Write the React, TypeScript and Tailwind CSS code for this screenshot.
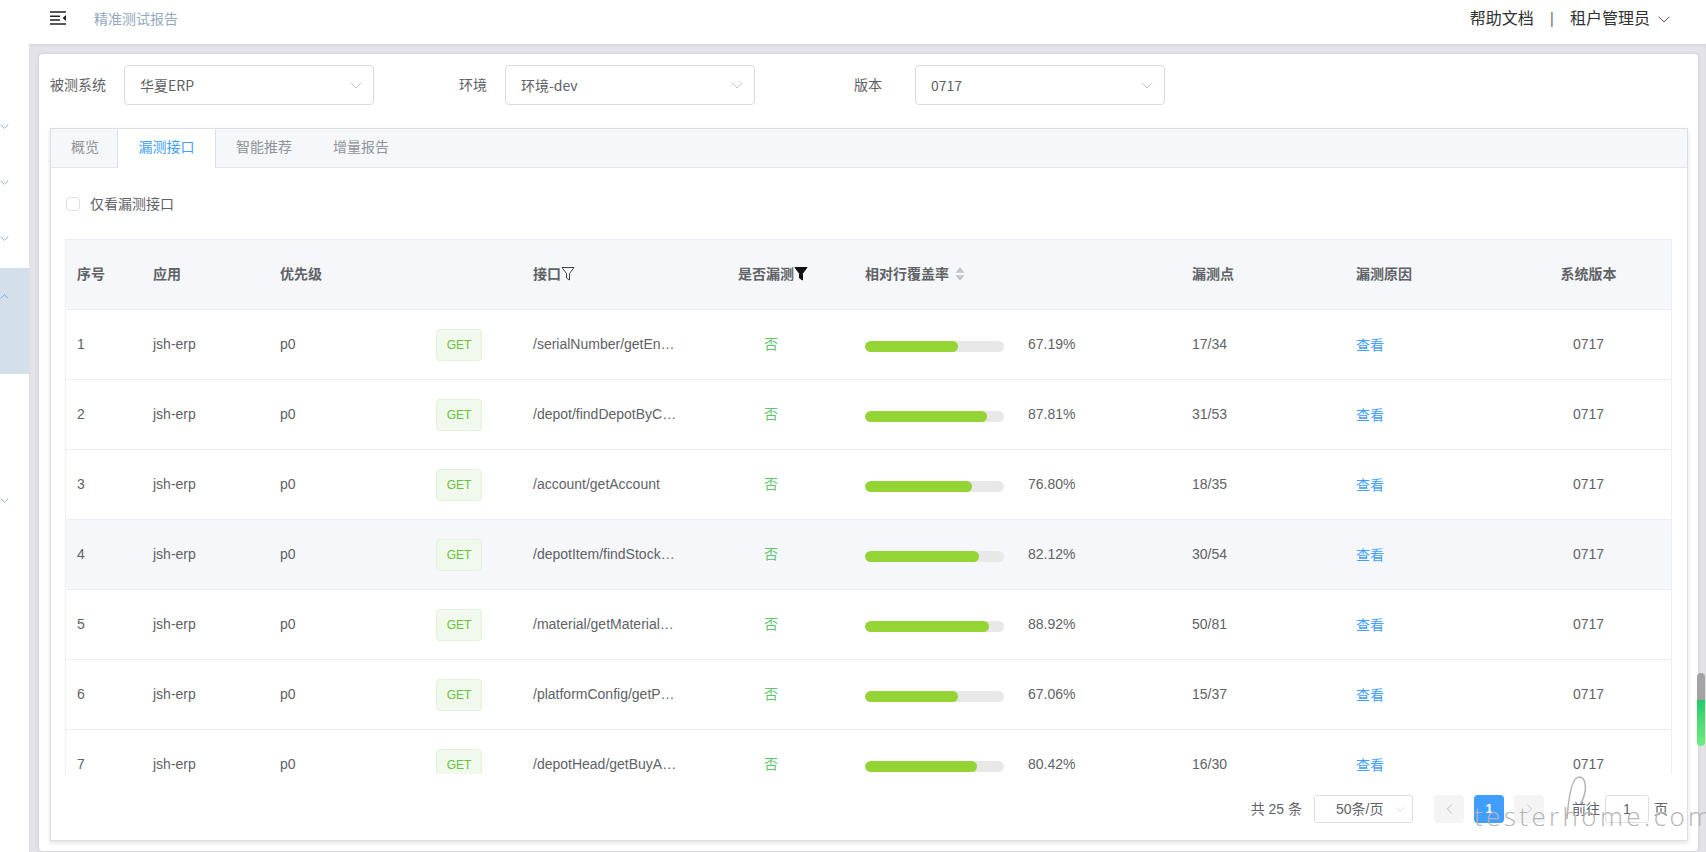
import React from "react";

const rows = [
  { path: "/serialNumber/getEn…", fill: "w-[67.19%]", pct: "67.19%", pts: "17/34" },
  { path: "/depot/findDepotByC…", fill: "w-[87.81%]", pct: "87.81%", pts: "31/53" },
  { path: "/account/getAccount", fill: "w-[76.80%]", pct: "76.80%", pts: "18/35" },
  { path: "/depotItem/findStock…", fill: "w-[82.12%]", pct: "82.12%", pts: "30/54", hover: true },
  { path: "/material/getMaterial…", fill: "w-[88.92%]", pct: "88.92%", pts: "50/81" },
  { path: "/platformConfig/getP…", fill: "w-[67.06%]", pct: "67.06%", pts: "15/37" },
  { path: "/depotHead/getBuyA…", fill: "w-[80.42%]", pct: "80.42%", pts: "16/30" },
];

function Chevron({ className = "" }: { className?: string }) {
  return (
    <svg viewBox="0 0 12 7" fill="none" className={className}>
      <path d="M0.7 0.8 6 6 11.3 0.8" stroke="currentColor" strokeWidth="1" />
    </svg>
  );
}

function SelectBox({ value, className = "" }: { value: string; className?: string }) {
  return (
    <div className={`flex h-10 w-[250px] items-center justify-between rounded border border-[#dcdcdc] pl-[15px] pr-[11px] font-['Noto_Sans_CJK_SC',sans-serif] text-sm text-[#606266] ${className}`}>
      <span>{value}</span>
      <Chevron className="h-[7px] w-[12px] text-[#c0c4cc]" />
    </div>
  );
}

function Funnel({ filled = false }: { filled?: boolean }) {
  return (
    <svg viewBox="0 0 14 15" className="h-[15px] w-[14px]">
      <path
        d="M1 1.5h12L8.5 7.5v6.5L5.5 12V7.5z"
        fill={filled ? "#111" : "none"}
        stroke={filled ? "#111" : "#444"}
        strokeWidth="1"
      />
    </svg>
  );
}

function Row({ r, i }: { r: (typeof rows)[number]; i: number }) {
  return (
    <div className={`flex h-[70px] shrink-0 items-center border-b border-[#ebeef5] pb-[2px] text-sm text-[#606266] ${r.hover ? "bg-[#f5f7fa]" : "bg-white"}`}>
      <div className="w-[76px] pl-[11px]">{i + 1}</div>
      <div className="w-[127px] pl-[11px]">jsh-erp</div>
      <div className="w-[157px] pl-[11px]">p0</div>
      <div className="w-[96px] pl-[10px]">
        <span className="mt-[3px] flex h-8 w-[46px] items-center justify-center rounded border border-[#e1f3d8] bg-[#f0f9eb] text-xs text-[#67c23a]">GET</span>
      </div>
      <div className="w-[164px] whitespace-nowrap pl-[11px]">{r.path}</div>
      <div className="w-[168px] pl-[2px] text-center text-[#5fc56f]">否</div>
      <div className="flex w-[327px] items-center pl-[11px]">
        <div className="mt-[5px] h-[11px] w-[139px] overflow-hidden rounded-full bg-[#e8e8e8]">
          <div className={`h-full rounded-full bg-[#95d435] ${r.fill}`} />
        </div>
        <span className="ml-[24px]">{r.pct}</span>
      </div>
      <div className="w-[164px] pl-[11px]">{r.pts}</div>
      <div className="w-[161px] pl-[11px] text-[#409eff]">
        <span className="relative top-[1px]">查看</span>
      </div>
      <div className="flex-1 text-center">0717</div>
    </div>
  );
}

export default function App() {
  return (
    <div className="relative flex h-[852px] w-[1706px] flex-col overflow-hidden bg-white font-['Liberation_Sans','Noto_Sans_CJK_SC',sans-serif]">
      <header className="flex h-[44px] shrink-0 items-start bg-white">
        <svg viewBox="0 0 16 14" className="ml-[50px] mt-[11px] h-[14px] w-[16px]">
          <path d="M0 1h16M0 13h16M0 5.2h10M0 9h10" stroke="#222" strokeWidth="1.5" fill="none" />
          <path d="M16 4v6l-3.5-3z" fill="#222" />
        </svg>
        <span className="ml-[28px] mt-[9px] text-sm text-[#97a8be]">精准测试报告</span>
        <div className="ml-auto mr-[36px] mt-[7px] flex items-center text-base text-[#303133]">
          <span>帮助文档</span>
          <span className="mx-[16px] text-[#777]">|</span>
          <span>租户管理员</span>
          <Chevron className="ml-[8px] h-[7px] w-[12px] text-[#555]" />
        </div>
      </header>

      <div className="flex min-h-0 flex-1">
        <aside className="flex w-[29px] shrink-0 flex-col bg-white pt-[54px] text-[#5b8fc0]">
          <div className="flex h-14 items-center"><Chevron className="h-[5px] w-[9px]" /></div>
          <div className="flex h-14 items-center"><Chevron className="h-[5px] w-[9px]" /></div>
          <div className="flex h-14 items-center"><Chevron className="h-[5px] w-[9px]" /></div>
          <div className="mt-[2px] h-[106px] bg-[#d3e0ec]">
            <div className="flex h-14 items-center"><Chevron className="h-[5px] w-[9px] rotate-180" /></div>
          </div>
          <div className="mt-[98px] flex h-14 items-center"><Chevron className="h-[5px] w-[9px]" /></div>
        </aside>

        <main className="min-w-0 flex-1 bg-[#e3e3e9] pl-[10px] pt-[10px] shadow-[inset_0_2px_3px_rgba(0,0,0,0.05)]">
          <section className="flex h-[797px] w-[1659px] flex-col rounded-sm bg-white px-[10px] pl-[11px] pt-[11px] shadow-[0_0_4px_rgba(0,0,0,0.12)]">
            <div className="flex h-10 items-center text-sm text-[#606266]">
              <span className="w-[74px]">被测系统</span>
              <SelectBox value="华夏ERP" />
              <span className="ml-[85px] w-[46px]">环境</span>
              <SelectBox value="环境-dev" />
              <span className="ml-[99px] w-[61px]">版本</span>
              <SelectBox value="0717" />
            </div>

            <div className="mt-[23px] flex h-[713px] w-[1638px] flex-col border border-[#dcdfe6] bg-white shadow-[0_2px_4px_rgba(0,0,0,0.12)]">
              <div className="flex h-[39px] shrink-0 border-b border-[#e4e7ed] bg-[#f5f7fa] pb-[1px] text-sm text-[#909399]">
                <div className="flex w-[66px] items-center pl-[20px] pb-[1px]">概览</div>
                <div className="-mb-[2px] flex w-[99px] items-center justify-center border-x border-[#dcdfe6] bg-white pb-[3px] text-[#409eff]">漏测接口</div>
                <div className="flex items-center pl-[20px] pb-[1px]">智能推荐</div>
                <div className="flex items-center pl-[41px] pb-[1px]">增量报告</div>
              </div>

              <div className="flex min-h-0 flex-1 flex-col pl-[14px] pr-[15px]">
                <label className="mt-[28px] flex h-[16px] items-center pl-[1px] text-sm text-[#606266]">
                  <span className="h-[14px] w-[14px] rounded-sm border border-[#dcdfe6] bg-white" />
                  <span className="ml-[10px]">仅看漏测接口</span>
                </label>

                <div className="mt-[27px] flex h-[535px] shrink-0 flex-col overflow-hidden border-x border-t border-[#ebeef5]">
                  <div className="flex h-[70px] shrink-0 items-center border-b border-[#ebeef5] bg-[#f5f7fa] pb-[2px] text-sm font-bold text-[#606266]">
                    <div className="w-[76px] pl-[11px]">序号</div>
                    <div className="w-[127px] pl-[11px]">应用</div>
                    <div className="w-[253px] pl-[11px]">优先级</div>
                    <div className="flex w-[164px] items-center pl-[11px]">接口<Funnel /></div>
                    <div className="flex w-[168px] items-center justify-center pl-[6px]">是否漏测<Funnel filled /></div>
                    <div className="flex w-[327px] items-center pl-[11px]">
                      相对行覆盖率
                      <svg viewBox="0 0 10 14" className="ml-[5px] h-[16px] w-[12px]">
                        <path d="M5 1l4 5H1zM5 13L1 8h8z" fill="#c0c4cc" />
                      </svg>
                    </div>
                    <div className="w-[164px] pl-[11px]">漏测点</div>
                    <div className="w-[161px] pl-[11px]">漏测原因</div>
                    <div className="flex-1 text-center">系统版本</div>
                  </div>
                  {rows.map((r, i) => <Row key={r.path} r={r} i={i} />)}
                </div>

                <div className="mt-[21px] flex h-[28px] items-center justify-end pr-[4px] text-sm text-[#606266]">
                  <span>共 25 条</span>
                  <div className="ml-[12px] flex h-[28px] w-[99px] items-center justify-between rounded-[3px] border border-[#dcdfe6] pl-[21px] pr-[7px]">
                    <span>50条/页</span>
                    <Chevron className="h-[5px] w-[9px] text-[#c0c4cc]" />
                  </div>
                  <div className="ml-[21px] flex h-[28px] w-[30px] items-center justify-center rounded-sm bg-[#f4f4f5] text-[#a8b0bd]">
                    <Chevron className="h-[6px] w-[11px] rotate-90" />
                  </div>
                  <div className="ml-[10px] flex h-[28px] w-[30px] items-center justify-center rounded-sm bg-[#409eff] text-[13px] font-bold text-white">1</div>
                  <div className="ml-[10px] flex h-[28px] w-[30px] items-center justify-center rounded-sm bg-[#f4f4f5] text-[#c0c4cc]">
                    <Chevron className="h-[6px] w-[11px] -rotate-90" />
                  </div>
                  <span className="ml-[28px]">前往</span>
                  <div className="ml-[5px] flex h-[28px] w-[44px] items-center justify-center rounded-[3px] border border-[#dcdfe6]">1</div>
                  <span className="ml-[5px]">页</span>
                </div>
              </div>
            </div>
          </section>
        </main>
      </div>

      {/* scrollbar overlay */}
      <div className="absolute right-[1px] top-[673px] flex h-[73px] w-[8px] flex-col overflow-hidden rounded-full">
        <div className="h-[27px] bg-[#a3a3a3]" />
        <div className="flex-1 bg-gradient-to-b from-[#22c96c] to-[#6cf07c]" />
      </div>

      {/* watermark */}
      <div className="pointer-events-none absolute left-[1474px] top-[799px] whitespace-nowrap font-['Open_Sans',sans-serif] text-[26px] font-light leading-[34px] tracking-[3.4px] text-[#b4b4b4]">
        testerhome.com
      </div>
      <svg viewBox="0 0 40 60" fill="none" className="pointer-events-none absolute left-[1564px] top-[768px] h-[60px] w-[30px]">
        <path d="M4 58C6 30 10 2 20 2c10 0 12 18 2 36" stroke="#b4b4b4" strokeWidth="2" />
      </svg>
    </div>
  );
}
